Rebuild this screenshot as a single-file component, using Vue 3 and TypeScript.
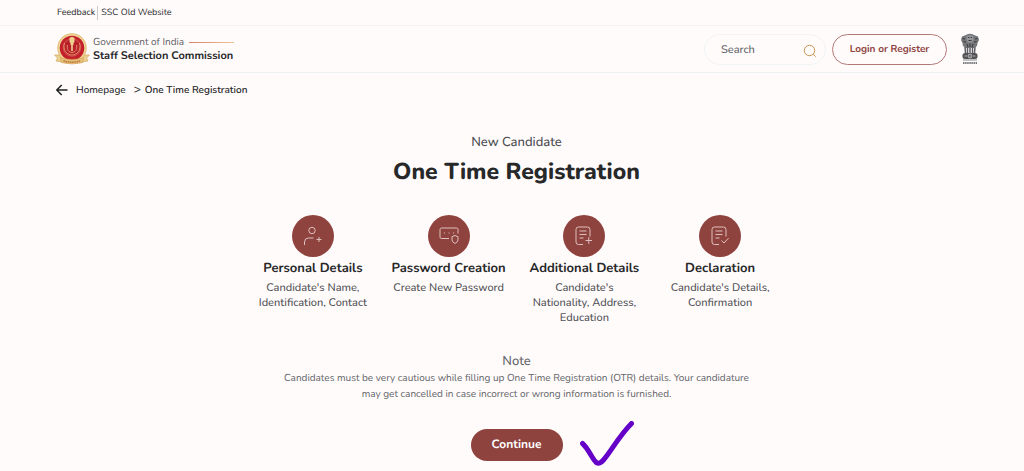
<script setup lang="ts">
import { ref } from 'vue'

type IconName = 'person' | 'password' | 'form' | 'declaration'

interface Step {
  icon: IconName
  title: string
  text: string
}

const steps: Step[] = [
  { icon: 'person', title: 'Personal Details', text: "Candidate's Name, Identification, Contact" },
  { icon: 'password', title: 'Password Creation', text: 'Create New Password' },
  { icon: 'form', title: 'Additional Details', text: "Candidate's Nationality, Address, Education" },
  { icon: 'declaration', title: 'Declaration', text: "Candidate's Details, Confirmation" },
]

const query = ref('')
</script>

<template>
  <div class="page">
    <nav class="topbar" aria-label="Utility">
      <a href="#feedback">Feedback</a>
      <a href="#old-site">SSC Old Website</a>
    </nav>

    <header class="header">
      <a class="brand" href="#home">
        <svg class="seal" viewBox="0 0 36 32" aria-hidden="true">
          <path d="M.5 22 L8 22 L9 29 L2 28 L3.500 25 Z M35.500 22 L28 22 L27 29 L34 28 L32.500 25 Z" fill="#ecd28e" stroke="#d0a860" stroke-width=".7" />
          <circle cx="18" cy="15" r="14.4" fill="#eed596" stroke="#d9b268" stroke-width=".7" />
          <circle cx="18" cy="15" r="12.300" fill="#c4202b" />
          <circle cx="18" cy="14.5" r="8.7" fill="#b81f2b" stroke="#dc7560" stroke-width=".7" />
          <path d="M10.500 10 C8.500 17 13 22 18 22 C23 22 27.500 17 25.500 10 M13.500 12 C12.500 17 15 19.500 18 19.500 C21 19.500 23.500 17 22.500 12" fill="none" stroke="#e59a6c" stroke-width=".9" />
          <path d="M15.500 5 Q18 3 20.500 5 L20.500 9 L19.500 10 V12 H16.500 V10 L15.500 9 Z M17.200 12 H18.800 V18 H17.200 Z" fill="#f0d090" />
          <path d="M6.500 24.500 Q18 28.500 29.500 24.500 L29 29.500 Q18 32.500 7 29.500 Z" fill="#e6c078" stroke="#cf9a50" stroke-width=".5" />
          <path d="M9.500 27.800 Q18 30.500 26.500 27.800" fill="none" stroke="#b9713b" stroke-width="1.500" stroke-dasharray="1.500 .7" />
        </svg>
        <span class="brand-text">
          <span class="brand-top">Government of India <i class="rule"></i></span>
          <strong>Staff Selection Commission</strong>
        </span>
      </a>

      <div class="actions">
        <form class="search" role="search" @submit.prevent>
          <input v-model="query" type="search" placeholder="Search" aria-label="Search" />
          <button type="submit" aria-label="Submit search">
            <svg viewBox="0 0 14 14" aria-hidden="true">
              <circle cx="6.500" cy="6.500" r="5.200" />
              <path d="M10.300 10.300 L12.700 12.700" />
            </svg>
          </button>
        </form>
        <button class="login" type="button">Login or Register</button>
        <svg class="emblem" viewBox="0 0 20 32" role="img" aria-label="State Emblem of India">
          <path d="M6 2 Q10 -.5 14 2 L18 3.500 L19 7 L17.500 10 L17 13 L14 15 H6 L3 13 L2.500 10 L1 7 L2 3.500 Z" fill="#74767a" />
          <path d="M7 3 Q10 1.500 13 3 L13.500 7 L12 9.500 H8 L6.500 7 Z" fill="#94969a" />
          <path d="M8 4.500 H9.300 M10.700 4.500 H12 M8.500 7.500 H11.500 M2.500 5.500 L5 6 M17.500 5.500 L15 6 M3.500 8.500 L6 9 M16.500 8.500 L14 9 M7 11 L8 14 M10 10.500 V14 M13 11 L12 14" stroke="#38393c" stroke-width="1" fill="none" />
          <path d="M5 14 L5.500 20 M7.500 14 V20 M10 15 V20 M12.500 14 V20 M15 14 L14.500 20" stroke="#5d5f63" stroke-width="1.500" />
          <rect x="2.500" y="20" width="15" height="6" rx="2.500" fill="#505256" />
          <circle cx="10" cy="23" r="2" fill="#777" stroke="#ddd" stroke-width=".6" />
          <path d="M4.500 23 H7 M13 23 H15.500" stroke="#aaa" stroke-width="1.200" />
          <path d="M3 27 H17" stroke="#85878b" stroke-width="1" />
          <path d="M3 30 H17" stroke="#77797c" stroke-width="1.800" stroke-dasharray="1.500 .6" />
        </svg>
      </div>
    </header>

    <nav class="crumbs" aria-label="Breadcrumb">
      <a class="back" href="#back" aria-label="Back">
        <svg viewBox="0 0 12 12" aria-hidden="true"><path d="M11.500 6 H1 M5.700 1 L.8 6 L5.700 11" /></svg>
      </a>
      <a href="#home">Homepage</a>
      <span class="sep">&gt;</span>
      <strong aria-current="page">One Time Registration</strong>
    </nav>

    <main class="main">
      <p class="eyebrow">New Candidate</p>
      <h1>One Time Registration</h1>

      <ul class="steps">
        <li v-for="step in steps" :key="step.title">
          <span class="disc">
            <svg v-if="step.icon === 'person'" viewBox="0 0 20 20" aria-hidden="true">
              <circle cx="9" cy="4.500" r="3.200" />
              <path d="M1.500 19 V16 Q1.500 12 5.500 12 H10.500 M13.500 13.500 H18.500 M16 11 V16" />
            </svg>
            <svg v-else-if="step.icon === 'password'" viewBox="0 0 20 20" aria-hidden="true">
              <path d="M10 12.500 H2.500 Q1 12.500 1 11 V3.500 Q1 2 2.500 2 H17.500 Q19 2 19 3.500 V7.500" />
              <path d="M5 7 H6 M9.500 7 H10.500 M14 7 H15" />
              <path d="M16 9.500 L19 10.700 V14 Q19 16 16 17.500 Q13 16 13 14 V10.700 Z" />
            </svg>
            <svg v-else viewBox="0 0 20 20" aria-hidden="true">
              <path d="M9 18.500 H4.500 Q2 18.500 2 16 V3.500 Q2 1 4.500 1 H13.500 Q16 1 16 3.500 V10.500" />
              <path d="M5.500 5 H12.500 M5.500 8.500 H12.500 M5.500 12 H9.500" />
              <path v-if="step.icon === 'form'" d="M11.500 14.500 H18 M14.750 11.200 V17.800" />
              <path v-else d="M11.500 14.500 L14 17 L18.500 12.200" />
            </svg>
          </span>
          <h2>{{ step.title }}</h2>
          <p>{{ step.text }}</p>
        </li>
      </ul>

      <section class="note">
        <h3>Note</h3>
        <p>
          Candidates must be very cautious while filling up One Time Registration (OTR) details. Your candidature may
          get cancelled in case incorrect or wrong information is furnished.
        </p>
      </section>

      <div class="proceed">
        <button type="button">Continue</button>
        <svg class="tick" viewBox="0 0 54 46" aria-hidden="true">
          <path d="M2.500 22.500 C9 28 13 40 17 42 C24 45 34 20 51.500 2.500" />
        </svg>
      </div>
    </main>
  </div>
</template>

<style>
body {
  margin: 0;
  background: #fffbfb;
}
</style>

<style scoped>
.page {
  box-sizing: border-box;
  min-height: 100vh;
  background: #fffbfb;
  color: #272829;
  font-family: Nunito, Lato, sans-serif;
  font-size: 11px;
  font-weight: 500;
  line-height: 15px;
  text-rendering: geometricPrecision;
}

a {
  color: inherit;
  text-decoration: none;
}

button,
input {
  font-family: inherit;
  text-rendering: inherit;
}

p,
h1,
h2,
h3,
ul {
  margin: 0;
  padding: 0;
}

.topbar,
.header,
.crumbs {
  display: flex;
  align-items: center;
  padding: 0 44px 0 54px;
}

.topbar {
  height: 25px;
  padding-left: 57px;
  border-bottom: 1px solid #f3f2f4;
  font-size: 9px;
  font-weight: 400;
  line-height: 14px;
}

.topbar a + a {
  margin-left: 2px;
  padding-left: 3px;
  border-left: 1px solid #c9c9cd;
}

.header {
  justify-content: space-between;
  height: 46px;
  border-bottom: 1px solid #edf1f4;
}

.brand {
  display: flex;
  align-items: center;
  gap: 3px;
}

.seal {
  width: 36px;
  height: 32px;
}

.brand-text {
  display: grid;
  line-height: 14px;
}

.brand-top {
  display: flex;
  align-items: center;
  gap: 5px;
  color: #5f6165;
  font-size: 10px;
  font-weight: 400;
}

.rule {
  width: 45px;
  height: 1px;
  background: linear-gradient(90deg, #d78070, #efc492);
}

.brand strong {
  font-size: 11px;
  font-weight: 700;
}

.actions {
  display: flex;
  align-items: center;
}

.search {
  box-sizing: border-box;
  display: flex;
  align-items: center;
  width: 122px;
  height: 31px;
  padding: 0 8px 0 16px;
  border: 1px solid #f0f4f7;
  border-radius: 16px;
}

.search input {
  flex: 1;
  min-width: 0;
  padding: 0;
  border: 0;
  outline: 0;
  background: transparent;
  color: #55585c;
  font-size: 11px;
  font-weight: 500;
}

.search input::placeholder {
  color: #5f6368;
  opacity: 1;
}

.search button {
  display: flex;
  padding: 4px 0 0;
  border: 0;
  background: none;
}

.search svg {
  width: 14px;
  height: 14px;
  fill: none;
  stroke: #c99350;
  stroke-width: 1;
}

.login {
  width: 115px;
  height: 31px;
  margin: 0 13px 0 6px;
  padding: 0;
  border: 1px solid #b27a77;
  border-radius: 16px;
  background: transparent;
  color: #8e4340;
  font-size: 10px;
  font-weight: 700;
}

.emblem {
  width: 20px;
  height: 32px;
}

.crumbs {
  height: 34px;
  padding-left: 56px;
  font-size: 10px;
}

.crumbs strong {
  font-weight: 600;
}

.back {
  display: flex;
  margin-right: 8px;
}

.back svg {
  width: 12px;
  height: 12px;
  fill: none;
  stroke: #222;
  stroke-width: 1.5;
}

.sep {
  margin: 0 4px 0 8px;
  font-size: 12px;
}

.main {
  display: flex;
  flex-direction: column;
  align-items: center;
  padding: 26px 44px 8px 53px;
  text-align: center;
}

.eyebrow {
  color: #4b4d50;
  font-size: 13px;
  line-height: 18px;
}

h1 {
  margin-top: 7px;
  font-size: 23px;
  font-weight: 800;
  line-height: 30px;
}

.steps {
  display: grid;
  grid-template-columns: repeat(4, 1fr);
  width: 100%;
  max-width: 543px;
  margin-top: 27px;
  list-style: none;
}

.steps li {
  display: flex;
  flex-direction: column;
  align-items: center;
}

.disc {
  display: grid;
  place-items: center;
  width: 42px;
  height: 42px;
  border-radius: 50%;
  background: #8f433f;
}

.disc svg {
  width: 20px;
  height: 20px;
  fill: none;
  stroke: #dfc0be;
  stroke-width: 1;
}

h2 {
  margin-top: 3px;
  font-size: 13px;
  font-weight: 700;
  line-height: 16px;
}

.steps p {
  max-width: 115px;
  margin-top: 4px;
  color: #4f5155;
  font-size: 11px;
}

.note {
  max-width: 470px;
  margin-top: 27px;
  color: #626468;
}

h3 {
  font-size: 13px;
  font-weight: 500;
  line-height: 18px;
}

.note p {
  font-size: 10px;
  font-weight: 400;
  line-height: 16px;
}

.proceed {
  position: relative;
  margin-top: 27px;
}

.proceed button {
  display: block;
  width: 92px;
  height: 32px;
  padding: 0;
  border: 0;
  border-radius: 16px;
  background: #8f433f;
  color: #fff;
  font-size: 12px;
  font-weight: 700;
}

.tick {
  position: absolute;
  top: -8px;
  left: 109px;
  width: 54px;
  height: 46px;
  fill: none;
  stroke: #6400c8;
  stroke-linecap: round;
  stroke-width: 5;
}
</style>
